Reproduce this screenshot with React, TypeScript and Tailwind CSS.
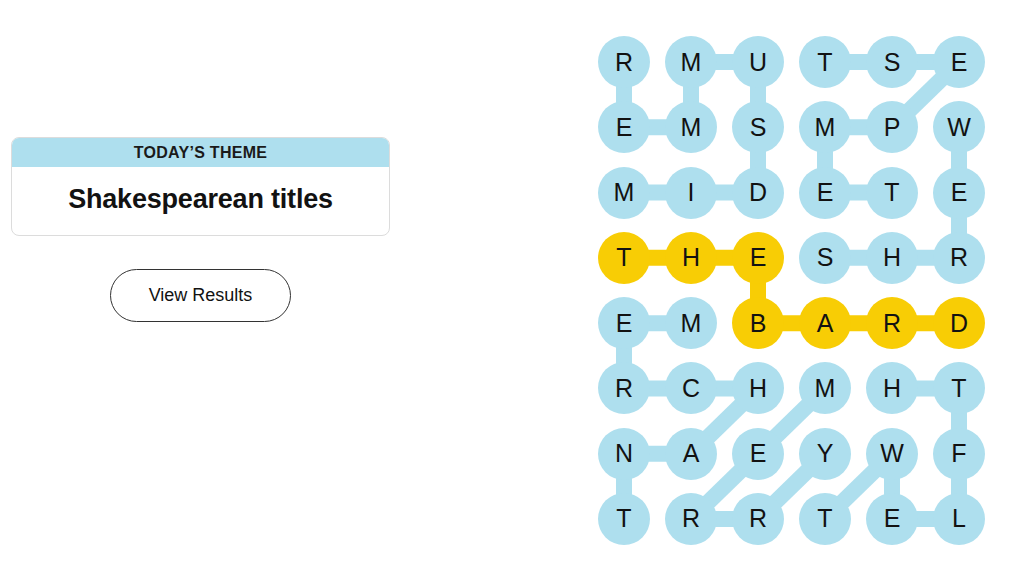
import React from "react";

const ROWS = ["RMUTSE", "EMSMPW", "MIDETE", "THESHR", "EMBARD", "RCHMHT", "NAEYWF", "TRRTEL"];

const SPAN = new Set(["3,0", "3,1", "3,2", "4,2", "4,3", "4,4", "4,5"]);

type Seg = [number, number, number, number, boolean?];

const SEGS: Seg[] = [
  // MIDSUMMER
  [2, 0, 2, 1], [2, 1, 2, 2], [2, 2, 1, 2], [1, 2, 0, 2], [0, 2, 0, 1], [0, 1, 1, 1], [1, 1, 1, 0], [1, 0, 0, 0],
  // TEMPEST
  [2, 4, 2, 3], [2, 3, 1, 3], [1, 3, 1, 4], [1, 4, 0, 5], [0, 5, 0, 4], [0, 4, 0, 3],
  // SHREW
  [3, 3, 3, 4], [3, 4, 3, 5], [3, 5, 2, 5], [2, 5, 1, 5],
  // MERCHANT
  [4, 1, 4, 0], [4, 0, 5, 0], [5, 0, 5, 1], [5, 1, 5, 2], [5, 2, 6, 1], [6, 1, 6, 0], [6, 0, 7, 0],
  // MERRY
  [5, 3, 6, 2], [6, 2, 7, 1], [7, 1, 7, 2], [7, 2, 6, 3],
  // TWELFTH
  [7, 3, 6, 4], [6, 4, 7, 4], [7, 4, 7, 5], [7, 5, 6, 5], [6, 5, 5, 5], [5, 5, 5, 4],
  // THE BARD
  [3, 0, 3, 1, true], [3, 1, 3, 2, true], [3, 2, 4, 2, true], [4, 2, 4, 3, true], [4, 3, 4, 4, true], [4, 4, 4, 5, true],
];

const cx = (c: number) => 26 + 67 * c;
const cy = (r: number) => 26 + (457 / 7) * r;

function Board() {
  return (
    <div className="relative">
      <svg className="absolute inset-0 z-0" width={387} height={509} viewBox="0 0 387 509">
        {SEGS.map(([r1, c1, r2, c2, y], i) => (
          <line
            key={i}
            x1={cx(c1)}
            y1={cy(r1)}
            x2={cx(c2)}
            y2={cy(r2)}
            stroke={y ? "#f8cd05" : "#aedfee"}
            strokeWidth={16}
          />
        ))}
      </svg>
      <div className="relative z-10 grid grid-cols-[repeat(6,52px)] grid-rows-[repeat(8,52px)] gap-x-[15px] gap-y-[13.29px]">
        {ROWS.flatMap((row, r) =>
          row.split("").map((ch, c) => (
            <div
              key={`${r}-${c}`}
              className={`flex h-[52px] w-[52px] items-center justify-center rounded-full text-[25px] leading-none text-[#121212] ${
                SPAN.has(`${r},${c}`) ? "bg-[#f8cd05]" : "bg-[#aedfee]"
              }`}
            >
              {ch}
            </div>
          ))
        )}
      </div>
    </div>
  );
}

export default function App() {
  return (
    <div
      className="flex h-[576px] w-[1024px] bg-white text-[#121212]"
      style={{ fontFamily: '"Liberation Sans", Arial, sans-serif' }}
    >
      <div className="flex w-[401px] flex-col items-center pt-[137px]">
        <div className="w-[379px] overflow-hidden rounded-[8px] border border-[#dcdcdc]">
          <div className="flex h-[29px] items-center justify-center bg-[#aedfee] text-[16px] font-bold tracking-[0.3px] text-[#1a1a1a]">
            TODAY’S THEME
          </div>
          <div className="flex h-[68px] items-center justify-center pb-[3px] text-[27px] font-bold tracking-[-0.2px]">
            Shakespearean titles
          </div>
        </div>
        <button className="mt-[33px] flex h-[53px] w-[181px] items-center justify-center rounded-full border border-[#333] text-[18px] text-[#121212]">
          View Results
        </button>
      </div>
      <div className="ml-[197px] pt-[36px]">
        <Board />
      </div>
    </div>
  );
}
